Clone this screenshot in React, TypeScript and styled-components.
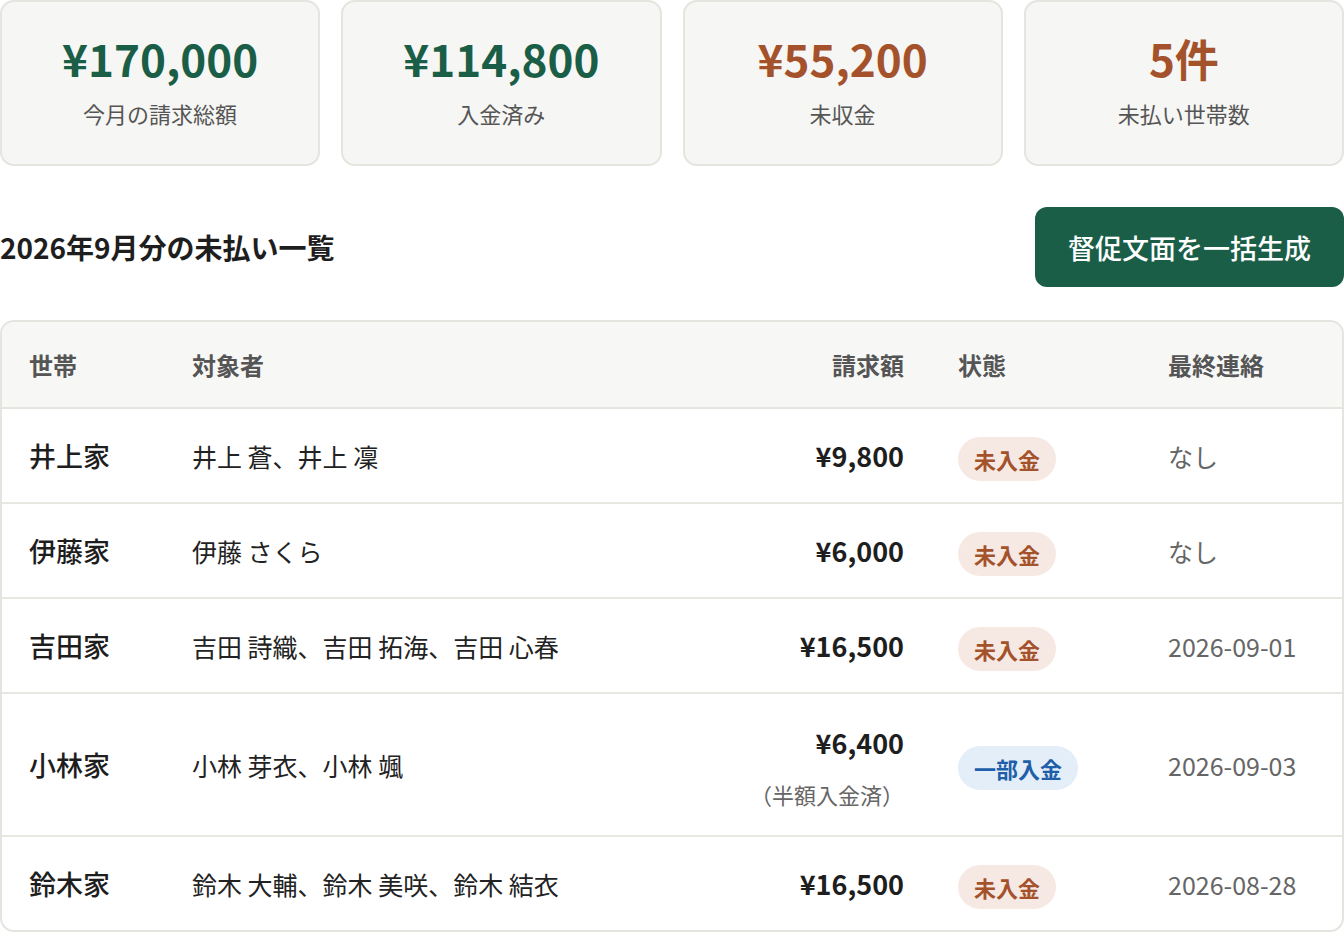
import styled, { createGlobalStyle } from "styled-components";

type Tone = "green" | "orange";
type Status = "unpaid" | "partial";

interface Summary {
  value: string;
  label: string;
  tone: Tone;
}

interface Household {
  name: string;
  members: string;
  amount: string;
  note?: string;
  status: Status;
  lastContact: string;
}

const summaries: Summary[] = [
  { value: "¥170,000", label: "今月の請求総額", tone: "green" },
  { value: "¥114,800", label: "入金済み", tone: "green" },
  { value: "¥55,200", label: "未収金", tone: "orange" },
  { value: "5件", label: "未払い世帯数", tone: "orange" },
];

const households: Household[] = [
  { name: "井上家", members: "井上 蒼、井上 凜", amount: "¥9,800", status: "unpaid", lastContact: "なし" },
  { name: "伊藤家", members: "伊藤 さくら", amount: "¥6,000", status: "unpaid", lastContact: "なし" },
  { name: "吉田家", members: "吉田 詩織、吉田 拓海、吉田 心春", amount: "¥16,500", status: "unpaid", lastContact: "2026-09-01" },
  { name: "小林家", members: "小林 芽衣、小林 颯", amount: "¥6,400", note: "（半額入金済）", status: "partial", lastContact: "2026-09-03" },
  { name: "鈴木家", members: "鈴木 大輔、鈴木 美咲、鈴木 結衣", amount: "¥16,500", status: "unpaid", lastContact: "2026-08-28" },
];

const statusLabel: Record<Status, string> = {
  unpaid: "未入金",
  partial: "一部入金",
};

const toneColor: Record<Tone, string> = {
  green: "#1b5e48",
  orange: "#a4522b",
};

const App = (): JSX.Element => {
  return (
    <>
      <GlobalStyle />
      <Page>
        <SummaryGrid>
          {summaries.map((s) => (
            <SummaryCard key={s.label}>
              <SummaryValue tone={s.tone}>{s.value}</SummaryValue>
              <SummaryLabel>{s.label}</SummaryLabel>
            </SummaryCard>
          ))}
        </SummaryGrid>

        <SectionHeader>
          <h2>2026年9月分の未払い一覧</h2>
          <PrimaryButton type="button">督促文面を一括生成</PrimaryButton>
        </SectionHeader>

        <Table>
          <HeadRow>
            <span>世帯</span>
            <span>対象者</span>
            <span className="right">請求額</span>
            <span>状態</span>
            <span>最終連絡</span>
          </HeadRow>
          {households.map((h) => (
            <BodyRow key={h.name}>
              <HouseholdName>{h.name}</HouseholdName>
              <Members>{h.members}</Members>
              <AmountCell>
                <strong>{h.amount}</strong>
                {h.note && <small>{h.note}</small>}
              </AmountCell>
              <StatusCell>
                <Badge status={h.status}>{statusLabel[h.status]}</Badge>
              </StatusCell>
              <LastContact>{h.lastContact}</LastContact>
            </BodyRow>
          ))}
        </Table>
      </Page>
    </>
  );
};

export default App;

const GlobalStyle = createGlobalStyle`
  html, body {
    margin: 0;
    padding: 0;
    background: #ffffff;
  }
  body {
    font-family: "Noto Sans CJK JP", "Noto Sans", sans-serif;
    color: #222222;
  }
  * {
    box-sizing: border-box;
  }
`;

const Page = styled.main`
  width: 1344px;
`;

const SummaryGrid = styled.section`
  display: grid;
  grid-template-columns: repeat(4, 1fr);
  gap: 21px;
`;

const SummaryCard = styled.div`
  display: flex;
  flex-direction: column;
  align-items: center;
  gap: 14px;
  height: 166px;
  padding: 30px 16px 0;
  background: #f6f6f4;
  border: 2px solid #e5e4df;
  border-radius: 14px;
`;

const SummaryValue = styled.div<{ tone: Tone }>`
  font-size: 44px;
  line-height: 52px;
  font-weight: 700;
  color: ${(props) => toneColor[props.tone]};
`;

const SummaryLabel = styled.div`
  font-size: 22px;
  line-height: 30px;
  color: #555555;
`;

const SectionHeader = styled.div`
  display: flex;
  align-items: center;
  justify-content: space-between;
  margin: 41px 0 33px;

  h2 {
    margin: 0;
    font-size: 28px;
    line-height: 40px;
    font-weight: 700;
    color: #1e1e1e;
  }
`;

const PrimaryButton = styled.button`
  height: 80px;
  padding: 0 33px;
  border: none;
  border-radius: 12px;
  background: #1b5e48;
  color: #ffffff;
  font-family: inherit;
  font-size: 27px;
  font-weight: 500;
  cursor: pointer;
`;

const Table = styled.div`
  border: 2px solid #e5e4df;
  border-radius: 14px;
  overflow: hidden;
`;

const columns = "163px 546px 220px 210px 201px";

const HeadRow = styled.div`
  display: grid;
  grid-template-columns: ${columns};
  align-items: center;
  height: 87px;
  background: #f7f7f5;
  border-bottom: 2px solid #e5e4df;

  span {
    padding: 0 27px;
    font-size: 24px;
    font-weight: 700;
    color: #555555;
  }
  .right {
    text-align: right;
  }
`;

const BodyRow = styled.div`
  display: grid;
  grid-template-columns: ${columns};
  align-items: center;
  padding: 24.5px 0;
  border-bottom: 2px solid #e8e7e2;
  line-height: 32px;

  &:last-child {
    border-bottom: none;
  }
  & > * {
    padding: 0 27px;
  }
`;

const HouseholdName = styled.div`
  font-size: 27px;
  font-weight: 500;
  color: #1e1e1e;
`;

const Members = styled.div`
  font-size: 25px;
  color: #222222;
`;

const AmountCell = styled.div`
  display: flex;
  flex-direction: column;
  align-items: flex-end;

  strong {
    font-size: 27px;
    font-weight: 700;
    color: #1e1e1e;
  }
  strong:not(:only-child) {
    line-height: 48px;
  }
  small {
    margin-top: 10px;
    font-size: 22px;
    line-height: 34px;
    color: #666666;
  }
`;

const StatusCell = styled.div`
  display: flex;
  align-items: center;
`;

const Badge = styled.span<{ status: Status }>`
  display: inline-block;
  margin: 3px 0 -3px;
  padding: 6px 16px;
  border-radius: 999px;
  font-size: 22px;
  line-height: 32px;
  font-weight: 700;
  background: ${(props) => (props.status === "partial" ? "#e4eef9" : "#f6e9e4")};
  color: ${(props) => (props.status === "partial" ? "#1f5ea8" : "#a4522b")};
`;

const LastContact = styled.div`
  font-size: 25px;
  color: #666666;
`;
